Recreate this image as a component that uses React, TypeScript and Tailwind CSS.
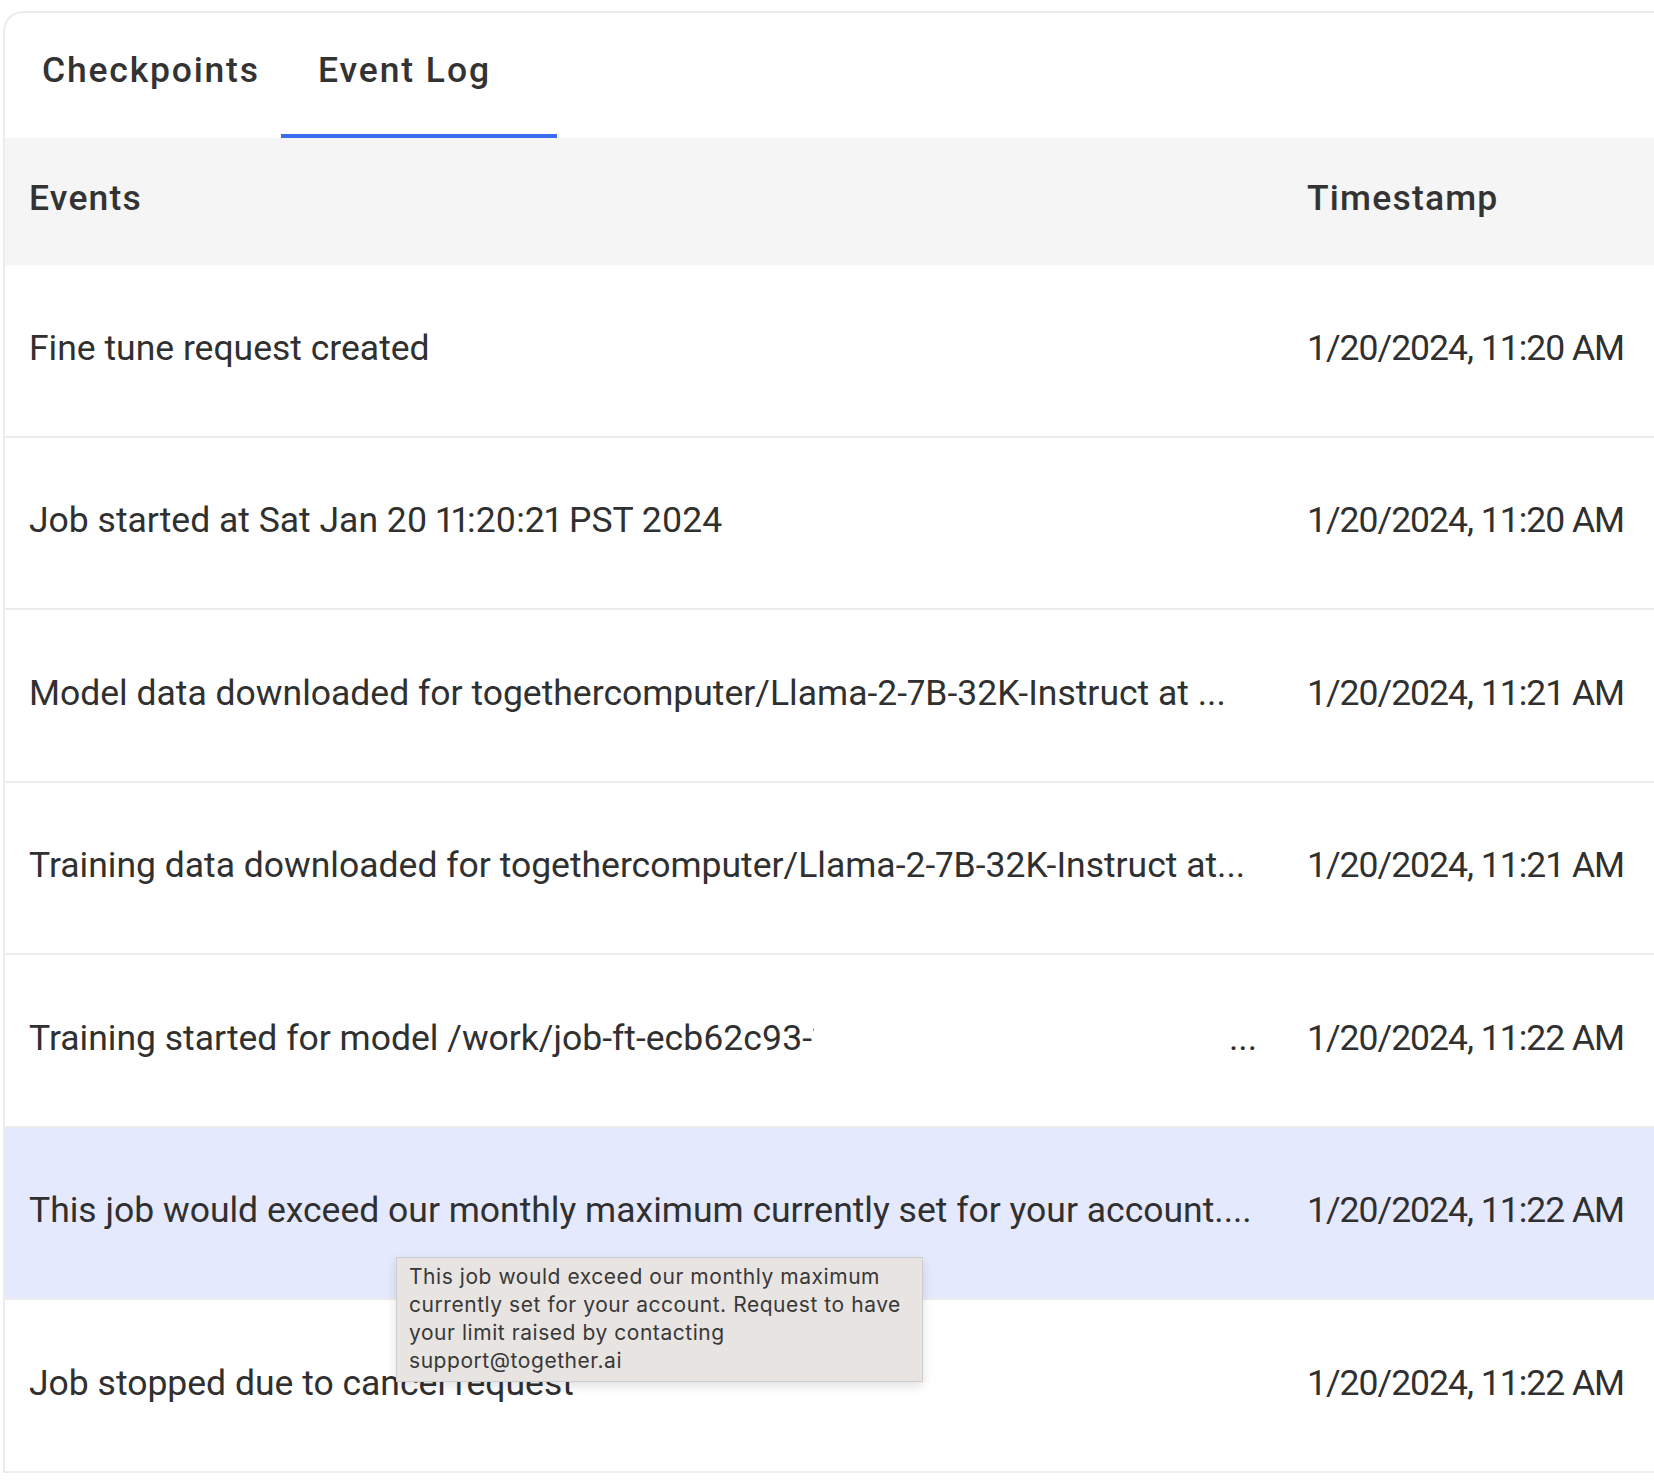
import React from 'react';

type EventRow = {
  id: number;
  message: string;
  shown?: string;
  timestamp: string;
  highlighted?: boolean;
  clipped?: boolean;
};

const EVENTS: EventRow[] = [
  { id: 1, message: 'Fine tune request created', timestamp: '1/20/2024, 11:20 AM' },
  { id: 2, message: 'Job started at Sat Jan 20 11:20:21 PST 2024', timestamp: '1/20/2024, 11:20 AM' },
  {
    id: 3,
    message:
      'Model data downloaded for togethercomputer/Llama-2-7B-32K-Instruct at /work/job-ft-ecb62c93-1d7f/model',
    shown: 'Model data downloaded for togethercomputer/Llama-2-7B-32K-Instruct at ...',
    timestamp: '1/20/2024, 11:21 AM',
  },
  {
    id: 4,
    message:
      'Training data downloaded for togethercomputer/Llama-2-7B-32K-Instruct at /work/job-ft-ecb62c93-1d7f/data',
    shown: 'Training data downloaded for togethercomputer/Llama-2-7B-32K-Instruct at...',
    timestamp: '1/20/2024, 11:21 AM',
  },
  {
    id: 5,
    message: 'Training started for model /work/job-ft-ecb62c93-1d7f',
    timestamp: '1/20/2024, 11:22 AM',
    clipped: true,
  },
  {
    id: 6,
    message:
      'This job would exceed our monthly maximum currently set for your account. Request to have your limit raised by contacting support@together.ai',
    shown: 'This job would exceed our monthly maximum currently set for your account....',
    timestamp: '1/20/2024, 11:22 AM',
    highlighted: true,
  },
  { id: 7, message: 'Job stopped due to cancel request', timestamp: '1/20/2024, 11:22 AM' },
];

const font = { fontFamily: 'Roboto, "Liberation Sans", sans-serif' };

export default function App() {
  return (
    <div className="relative min-h-[1484px] bg-white pl-[3px] pt-[11px] text-[#303030]" style={font}>
      <div className="overflow-hidden rounded-tl-[20px] border-l-2 border-t-2 border-[#ececf0] bg-white">
        {/* Tabs */}
        <div className="flex h-[125px]">
          <div className="w-[276px] pl-[37px] pt-[39px] text-[35.5px] font-medium leading-[36px] tracking-[1.8px] text-[#333]">
            Checkpoints
          </div>
          <div className="w-[276px] border-b-4 border-[#3b6cf0] pl-[37px] pt-[39px] text-[35.5px] font-medium leading-[36px] tracking-[1.9px] text-[#333]">
            Event Log
          </div>
        </div>

        {/* Table header */}
        <div className="flex h-[127px] items-center bg-[#f5f5f5] pb-[6px] text-[35.5px] font-medium tracking-[1.2px] text-[#333]">
          <div className="w-[1278px] pl-[24px]">Events</div>
          <div className="pl-[24px]">Timestamp</div>
        </div>

        {/* Rows */}
        {EVENTS.map((ev) => (
          <div
            key={ev.id}
            title={ev.message}
            className={`flex h-[172.5px] items-center border-b-2 border-[#ececf0] pb-[4px] text-[35.5px] ${
              ev.highlighted ? 'bg-[#e5e9fd]' : 'bg-white'
            }`}
          >
            <div className="flex w-[1278px] min-w-0 pl-[24px] pr-[26px] [font-variant-numeric:proportional-nums]">
              {ev.clipped ? (
                <>
                  <span className="w-[785px] overflow-hidden whitespace-nowrap">{ev.message}</span>
                  <span className="ml-auto">...</span>
                </>
              ) : (
                <span className="truncate">{ev.shown ?? ev.message}</span>
              )}
            </div>
            <div className="whitespace-nowrap pl-[24px] tracking-[-1px]">{ev.timestamp}</div>
          </div>
        ))}
      </div>

      {/* Native-style tooltip */}
      <div
        className="absolute left-[396px] top-[1257px] w-[527px] border border-[#cdcdcd] bg-[#e7e4e1] px-[12px] pb-[6px] pt-[5px] text-[21px] leading-[28px] tracking-[0.55px] text-[#383838] shadow-[0_4px_10px_rgba(0,0,0,0.12)]"
        style={{ fontFamily: 'Inter, Roboto, sans-serif' }}
      >
        <div>This job would exceed our monthly maximum</div>
        <div>currently set for your account. Request to have</div>
        <div>your limit raised by contacting</div>
        <div>support@together.ai</div>
      </div>
    </div>
  );
}
